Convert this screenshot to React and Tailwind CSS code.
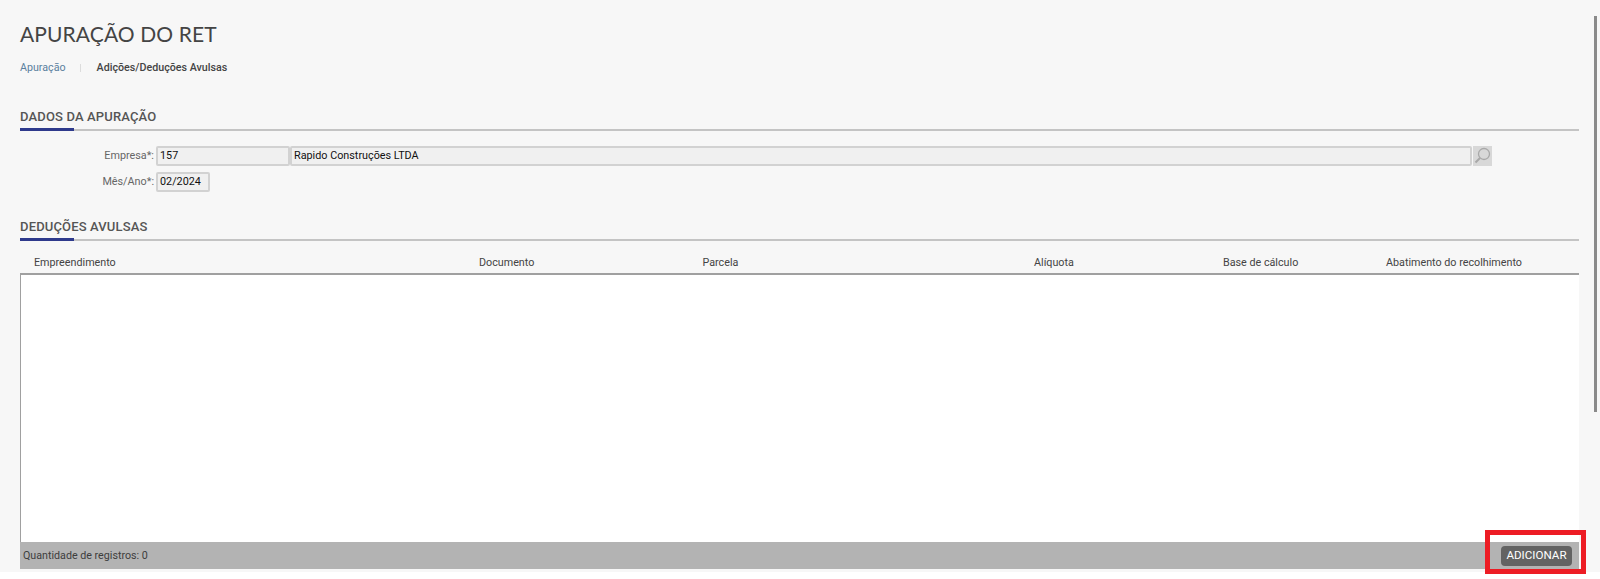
import React from 'react';

const SectionTitle = ({ children, className = '' }) => (
  <div className={`relative border-b-2 border-[#c4c4c4] h-[24px] ${className}`}>
    <h2 className="text-[13px] leading-[20px] font-medium text-[#555] tracking-[0.15px]">{children}</h2>
    <div className="absolute left-0 -bottom-[2px] w-[54px] h-[3px] bg-[#2e3a8c]" />
  </div>
);

const Field = ({ className = '', children }) => (
  <div className={`h-[20px] bg-[#f0f0f0] border-2 border-[#d2d2d2] rounded-[2px] pl-[2px] text-[10.8px] leading-[15px] text-[#111] ${className}`}>
    {children}
  </div>
);

const columns = [
  { label: 'Empreendimento', width: 'w-[445px]' },
  { label: 'Documento', width: 'w-[223.5px]' },
  { label: 'Parcela', width: 'w-[331.5px]' },
  { label: 'Alíquota', width: 'w-[189px]' },
  { label: 'Base de cálculo', width: 'w-[163px]' },
  { label: 'Abatimento do recolhimento', width: 'w-[180px]' },
];

export default function App() {
  return (
    <div className="relative h-[579px] w-[1600px] overflow-hidden bg-white font-['Roboto',sans-serif]">
      <div className="h-[572px] bg-[#f7f7f7] pl-[20px] pr-[21px] pt-[20px]">
        <h1 className="font-['Lato',sans-serif] text-[21px] leading-[28px] text-[#444] tracking-[0.1px]">APURAÇÃO DO RET</h1>

        <div className="flex items-center mt-[12px] h-[16px] text-[10.7px]">
          <span className="text-[#5a7f9e]">Apuração</span>
          <span className="w-px h-[8px] bg-[#dcdcdc] ml-[14px] mr-[16px]" />
          <span className="font-medium text-[#444]">Adições/Deduções Avulsas</span>
        </div>

        <SectionTitle className="mt-[31px]">DADOS DA APURAÇÃO</SectionTitle>

        <div className="mt-[15px] flex items-center h-[20px]">
          <span className="w-[136px] text-right text-[10.8px] text-[#666] pr-[2px]">Empresa*:</span>
          <Field className="w-[134px]">157</Field>
          <Field className="w-[1182px]">Rapido Construções LTDA</Field>
          <div className="ml-[1px] w-[19px] h-[20px] bg-[#d8d8d8] flex items-center justify-center">
            <svg width="19" height="20" viewBox="0 0 19 20" fill="none" stroke="#a8a8a8">
              <circle cx="11" cy="8" r="5.5" strokeWidth="1.3" />
              <path d="M7 12 L2.5 16.5" strokeWidth="2" />
            </svg>
          </div>
        </div>
        <div className="mt-[6px] flex items-center h-[20px]">
          <span className="w-[136px] text-right text-[10.8px] text-[#666] pr-[2px]">Mês/Ano*:</span>
          <Field className="w-[54px]">02/2024</Field>
        </div>

        <SectionTitle className="mt-[25px]">DEDUÇÕES AVULSAS</SectionTitle>

        <div className="flex h-[32px] items-center pl-[14px] pt-[12px] text-[10.75px] text-[#444]">
          {columns.map((col) => (
            <span key={col.label} className={col.width}>{col.label}</span>
          ))}
        </div>

        <div className="h-[269px] bg-white border-t-2 border-l border-[#a0a0a0]" />

        <div className="flex h-[27px] items-center justify-between bg-[#b3b3b3] pl-[3px] pr-[7px]">
          <span className="pt-[1px] text-[10.7px] text-[#3d3d3d]">Quantidade de registros: 0</span>
          <button className="h-[20px] w-[71px] rounded-[4px] bg-[#636363] text-[11.6px] text-white">ADICIONAR</button>
        </div>
      </div>

      {/* scrollbar */}
      <div className="absolute left-[1594px] top-[16px] w-[3px] h-[396px] bg-[#8a8a8a]" />
      {/* marcacao vermelha */}
      <div className="absolute left-[1485px] top-[530px] w-[101px] h-[44px] border-[5px] border-[#ed1c24]" />
    </div>
  );
}
